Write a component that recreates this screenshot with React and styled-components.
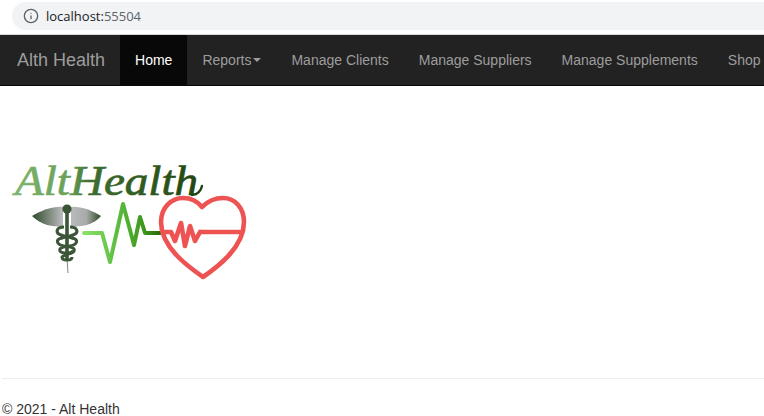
import React from 'react'
import styled, { createGlobalStyle } from 'styled-components'
import { Info } from 'lucide-react'

const Global = createGlobalStyle`
  html, body {
    margin: 0;
    padding: 0;
    background: #fff;
    overflow: hidden;
  }
  body {
    font-family: "Liberation Sans", Arial, sans-serif;
    font-size: 14px;
    color: #333;
  }
`

const Page = styled.div`
  width: 764px;
  height: 416px;
  overflow: hidden;
  display: flex;
  flex-direction: column;
`
const BrowserBar = styled.div`
  height: 35px;
  flex: none;
  box-sizing: border-box;
  padding: 2px 0 4px 12px;
  border-bottom: 1px solid #d8d8d8;
`
const AddressPill = styled.div`
  height: 28px;
  display: flex;
  align-items: center;
  gap: 7px;
  padding-left: 11px;
  background: #f1f3f4;
  border-radius: 14px 0 0 14px;
  color: #5f6368;
`
const Url = styled.span`
  font-family: "Open Sans", "Noto Sans", sans-serif;
  font-size: 13px;
  color: #5f6368;
  b {
    font-weight: 400;
    color: #202124;
  }
`
const Navbar = styled.nav`
  height: 51px;
  flex: none;
  box-sizing: border-box;
  display: flex;
  padding-left: 2px;
  background: #222;
  border-bottom: 1px solid #080808;
  white-space: nowrap;
  overflow: hidden;
`
const Brand = styled.a`
  padding: 15px;
  font-size: 18px;
  line-height: 20px;
  color: #9d9d9d;
`
const NavItem = styled.a`
  display: flex;
  align-items: center;
  flex: none;
  padding: 0 15px;
  height: 50px;
  line-height: 20px;
  color: ${p => (p.$active ? '#fff' : '#9d9d9d')};
  background: ${p => (p.$active ? '#080808' : 'transparent')};
`
const Caret = styled.span`
  width: 0;
  height: 0;
  margin-left: 2px;
  border-top: 4px solid #9d9d9d;
  border-left: 4px solid transparent;
  border-right: 4px solid transparent;
`
const Main = styled.main`
  flex: 1;
  display: flex;
  flex-direction: column;
  padding: 72px 0 0 2px;
`
const Logo = styled.svg`
  display: block;
  width: 240px;
  height: 125px;
  margin-left: 8px;
  flex: none;
`
const Rule = styled.hr`
  width: 100%;
  margin: 95px 0 0;
  border: 0;
  border-top: 1px solid #eee;
`
const Footer = styled.footer`
  margin-top: 20px;
  line-height: 20px;
  color: #333;
`

const LogoArt = () => (
  <Logo viewBox="10 158 240 125" aria-label="AltHealth logo">
    <defs>
      <linearGradient id="word" gradientUnits="userSpaceOnUse" x1="15" y1="0" x2="200" y2="0">
        <stop offset="0" stopColor="#7cb56c" />
        <stop offset="0.3" stopColor="#6a9f58" />
        <stop offset="0.4" stopColor="#3f6f30" />
        <stop offset="1" stopColor="#22450f" />
      </linearGradient>
      <linearGradient id="pulse" gradientUnits="userSpaceOnUse" x1="83" y1="0" x2="160" y2="0">
        <stop offset="0" stopColor="#8ae468" />
        <stop offset="0.5" stopColor="#58b83c" />
        <stop offset="0.8" stopColor="#3c9518" />
        <stop offset="1" stopColor="#2c6a10" />
      </linearGradient>
      <linearGradient id="wingL" gradientUnits="userSpaceOnUse" x1="32" y1="0" x2="62" y2="0">
        <stop offset="0" stopColor="#2e4a2a" />
        <stop offset="1" stopColor="#b9b9bb" />
      </linearGradient>
      <linearGradient id="wingR" gradientUnits="userSpaceOnUse" x1="72" y1="0" x2="101" y2="0">
        <stop offset="0" stopColor="#b9b9bb" />
        <stop offset="0.5" stopColor="#a8aaa8" />
        <stop offset="1" stopColor="#2e4a2a" />
      </linearGradient>
    </defs>

    <text
      x="15"
      y="195"
      fontFamily="'Liberation Serif', serif"
      fontStyle="italic"
      fontSize="43"
      fill="url(#word)"
      stroke="url(#word)"
      strokeWidth="0.7"
      textLength="183"
      lengthAdjust="spacingAndGlyphs"
    >
      AltHealth
    </text>
    <path d="M192 195 C197 195 201 191 202 186" fill="none" stroke="#22450f" strokeWidth="2.4" strokeLinecap="round" />

    {/* caduceus */}
    <path d="M32 216 C42 210 54 206 63 207 L63 226 C57 227 52 226 47 225 C41 223 36 220 32 216 Z" fill="url(#wingL)" />
    <path d="M101 216 C91 210 80 206 71 207 L71 226 C77 227 82 226 87 225 C93 223 98 220 101 216 Z" fill="url(#wingR)" />
    <path d="M67 212 L67 259" stroke="#3b5537" strokeWidth="3.6" />
    <path d="M67 259 L68 273" stroke="#7d8c7a" strokeWidth="1" />
    <circle cx="67" cy="209" r="4.6" fill="#3b5537" />
    <path
      d="M64 227 C56 227 55 233 61 235 C70 238 79 238 76 243 C73 248 62 245 60 249 C58 254 70 254 73 251 M70 227 C78 227 79 233 73 235 C64 238 55 238 58 243 C61 248 72 245 74 249 C76 254 64 254 62 257 C62 261 72 261 72 257"
      fill="none"
      stroke="#3b5537"
      strokeWidth="3"
    />

    {/* pulse line */}
    <path
      d="M84 233 L102 233 L110 262 L123 204 L134 245 L140 217 L145 233 L160 233"
      fill="none"
      stroke="url(#pulse)"
      strokeWidth="4"
      strokeLinejoin="round"
      strokeLinecap="round"
    />

    {/* heart */}
    <path
      d="M203 277 C190 268 161 248 161 222 C161 207 172 198 183 198 C192 198 198 202 202 207 C207 202 214 198 223 198 C235 198 244 208 244 222 C244 248 216 268 203 277 Z"
      fill="none"
      stroke="#ee5353"
      strokeWidth="4.6"
      strokeLinejoin="round"
    />
    <path d="M200 232 L244 232" stroke="#ee5353" strokeWidth="4.6" />
    <path
      d="M164 232 L171 232 L175 241 L181 223 L185 246 L190 226 L195 241 L200 232"
      fill="none"
      stroke="#ee5353"
      strokeWidth="4.6"
      strokeLinejoin="round"
      strokeLinecap="round"
    />
  </Logo>
)

export default function App() {
  return (
    <Page>
      <Global />
      <BrowserBar>
        <AddressPill>
          <Info size={16} strokeWidth={2} />
          <Url><b>localhost:</b>55504</Url>
        </AddressPill>
      </BrowserBar>
      <Navbar>
        <Brand>Alth Health</Brand>
        <NavItem $active>Home</NavItem>
        <NavItem>Reports<Caret /></NavItem>
        <NavItem>Manage Clients</NavItem>
        <NavItem>Manage Suppliers</NavItem>
        <NavItem>Manage Supplements</NavItem>
        <NavItem>Shop</NavItem>
      </Navbar>
      <Main>
        <LogoArt />
        <Rule />
        <Footer>© 2021 - Alt Health</Footer>
      </Main>
    </Page>
  )
}
